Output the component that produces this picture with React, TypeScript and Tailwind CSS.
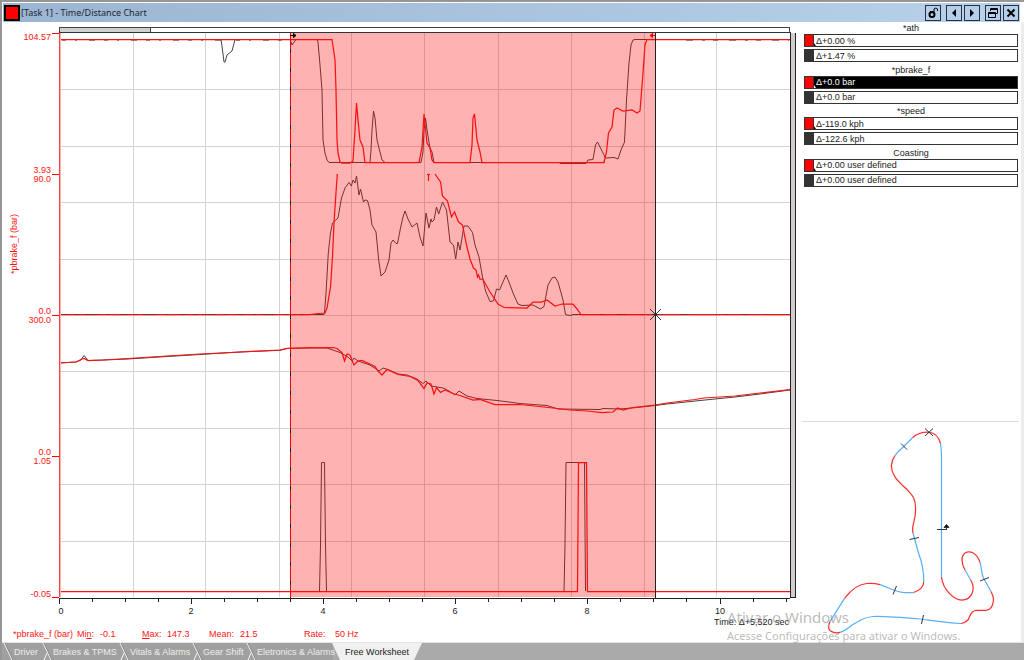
const groups = [
  { name: '*ath', values: ['Δ+0.00 %', 'Δ+1.47 %'], active: false },
  { name: '*pbrake_f', values: ['Δ+0.0 bar', 'Δ+0.0 bar'], active: true },
  { name: '*speed', values: ['Δ-119.0 kph', 'Δ-122.6 kph'], active: false },
  { name: 'Coasting', values: ['Δ+0.00 user defined', 'Δ+0.00 user defined'], active: false },
];

const tabs = [
  { label: 'Driver', width: 'w-[39px]' },
  { label: 'Brakes & TPMS', width: 'w-[77px]' },
  { label: 'Vitals & Alarms', width: 'w-[73px]' },
  { label: 'Gear Shift', width: 'w-[54px]' },
  { label: 'Eletronics & Alarms', width: 'w-[88px]' },
];

const gridX = [133, 205, 279, 351, 424, 498, 571, 644, 716];
const gridY = [89, 146, 202, 259, 315, 371, 428, 484, 541];
const ticks = Array.from({ length: 23 }, (_, i) => Math.floor(59 + i * 33.05));

const scaleLabels = [
  { y: 40, text: '104.57' },
  { y: 173, text: '3.93' },
  { y: 182, text: '90.0' },
  { y: 314, text: '0.0' },
  { y: 323, text: '300.0' },
  { y: 455, text: '0.0' },
  { y: 464, text: '1.05' },
  { y: 597, text: '-0.05' },
];

// Reference lap
const darkTraces = [
  '59,39.5 221,39.5 222,46 224,62 225,62 227,55 232,51 235,39.5 290,39.5 292,45 296,39.5 317,39.5 318,42 320,65 322,90 323,140 325,153 327,160 329,162.5 370,162.5 371,150 372,130 373.5,111 375,118 377,140 380,152 382,160 385,162.5 421,162.5 423,152 424,130 425.5,118 427,130 430,148 432,152 434,162.5 559,162.5 560,163.5 586,163.5 588,160 593,159.5 595.5,145 597.5,142 605.5,158 614,157.5 618,159 621,150 624.5,142 626.5,100 629,63 631,45 633,40 635,39.5 790,39.5',
  '59,314.5 324,314.5 324.5,313 326,293 328.3,253 330.5,233 332.5,223 338,218 341.5,198 345,188 349,182.5 351.3,186 353,180 355,183 356.5,176 359,195 360.5,189 363.5,202 365,200 367.5,200.5 370,210 372,225 376,232 378.7,260 381,276 385,272 389,260 391,243 393,240 396,243.5 397.5,243.5 400.5,228 403,217 405,211 408,219 412,227 417,223 420,237 423,246 426,213 429,228 431,219 432,222 434,220 436.5,207 438.7,214 442.5,202 446.5,210 450,242 453.5,245 455.7,259 458,242 460,250 464,226 468,226 472.5,232.5 475,245 479,257 482.5,277 485.5,291 490,301.5 493.5,301 496.5,289 499.5,290 506,275 509,282 513,293 518,304 522,305.5 533,305 540.5,309 544,306.5 548,285 552,278 555,277 558,282 563,300 565.5,314.5 570,315.5 573,314.5 790,314.5',
  '59,363 76,362 81,360 84,355.5 88,360.5 103,360 128,359 167,356.5 200,354.5 240,352 280,350.3 287,348.5 310,348 327,348 340,352.5 348,357 352,361 354,358 358,361 370,365 379,371 383,368 388,369.5 398,374 407,375 417,379 423,383.5 426,381 431,386 443,388 449,391 455,395 459,391 467,396 477,398.5 497,400.5 520,403.5 547,405.5 558,409 600,409.5 603,408.5 620,409 637,407.5 655,405.5 667,404 700,400.5 735,397 760,394 790,390',
  '319.5,591 320.5,545 321.5,462.5 324.5,462.5 325.5,545 326.5,591',
  '564,591 565,545 566,462.5 584.5,462.5 585.5,591',
];

// Main lap
const redTraces = [
  '59,39.5 332,39.5 335,60 336,90 337,140 338,153 340,162 342,163 350,163 353,161 355,130 356.5,103 358,120 360,140 363,147 365,162.5 419,162.5 422,147 424,114 427,143 430,148 432,160 434,162.5 470,162.5 472,145 473,118 474.5,114 477,140 480,152 482,162.5 604,162.5 606.5,152 608.5,133 612,127 614,110 617,108 623,111 632,110 637,113 640,111 642.5,80 645,45 647,39.5 790,39.5',
  '59,314.5 310,314.5 318,313.5 325,313 327,308 330.5,287 332.5,257 334,223 335.7,197 337.3,174',
  '427,174.5 430,174.5',
  '428.5,174 428.5,181',
  '435,174 440.5,182 442.5,196 447.5,201 451.5,217 454.5,212 458.5,222 462.5,225 466.5,245 470,259 473.5,268 476,270 477.5,277 478.5,275 480,279 482.7,279 490,292 498,304 504,307.5 527,308 533,302 541.5,302 547,300 555,306 562,304 573,304 577,309 581,314.5 790,314.5',
  '59,363 76,362 82,359 84,358.5 88,360.5 103,360 128,358.5 167,356 200,354 240,352 280,350 287,348.3 310,347.5 333,347.5 337,348.5 342,352.5 344.5,361 347,354 350,355 354,365 358,361 362,360.5 375,366.5 378,371 382,375 387,369.5 398,374.5 410,376.5 418,380.5 424,388.5 427,383 431,384 434,394 436.5,387.5 440.5,392.5 445,390 453,393.5 460,395.5 473,400 480,399.5 495,404.5 520,404.5 553,408 570,410 587,411 602,412.5 613,412 617.5,408 623,410 633,407.5 655,405 667,403 695,399.5 704,398 735,396 760,393 790,389.5',
  '59,591.5 577.5,591.5 578.5,462.5 586.5,462.5 587.5,591.5 790,591.5',
];

const trackBlue = [
  'M940.5 443.5 Q941.5 450 941.5 460 V577',
  'M970.7 580 L965 570',
  'M980 562.5 C982 568 981 573 983.5 578 L991 591.5',
  'M961 623.5 C947 623 935 621 920 619 C903 617.5 885 616 873 616.5 Q866 617 861 620 L852 625 Q845 631 840 632.3',
  'M830 621.7 L844.5 598.3',
  'M880 584.7 C890 588 895 592 904 592.5 H913.5',
  'M923.7 582 C924 570 922 562 918.5 553 L913 533',
  'M895 455.7 Q898 451 903.5 446.7 L912.7 437.5',
];

const trackRed = [
  'M941.5 577 C943 590 954 600 962 600 C970 600 977 591 970.7 580',
  'M965 570 C961 563 961 556 965 553 C970 550 977 553 980 562.5',
  'M991 591.5 C993 595 993.5 597 993.5 600 C993 606 991 610 986 610.3 H976 C970 611 970 617 968 620 Q965 623 961 623.5',
  'M840 632.3 C834 634 829 631 828.7 628 Q828.5 624 830 621.7',
  'M844.5 598.3 C851 590 858 584 866.7 583.5 Q874 583 880 584.7',
  'M913.5 592.5 C920 591 924 586 923.7 582',
  'M913 533 C911 525 916 520 915.5 510 C916 498 912 495 906.5 489 C902 485 896 480 894 475 C890 469 891 461 895 455.7',
  'M912.7 437.5 Q918 432 928.5 432 C936 433 939 437 940.5 443.5',
];

function TimeChart() {
  return (
    <svg
      viewBox="2 22 795 594"
      preserveAspectRatio="xMinYMin meet"
      className="block min-h-0 w-full flex-1"
      fontFamily="'Liberation Sans', sans-serif"
      fontSize="9"
      role="img"
      aria-label="Time/Distance Chart"
    >
      {/* Zoom range */}
      <rect x="59.5" y="27.5" width="730" height="5" fill="#fff" stroke="#444" />
      <rect x="59.5" y="27.5" width="91" height="5" fill="#d0d0d0" stroke="#444" />

      {/* Grid */}
      <g fill="#d3d3d3" shapeRendering="crispEdges">
        {gridX.map((x) => (
          <rect key={x} x={x} y="33" width="1" height="564" />
        ))}
        {gridY.map((y) => (
          <rect key={y} x="60" y={y} width="730" height="1" />
        ))}
      </g>

      <g fill="none" stroke="#444" strokeWidth="1">
        {darkTraces.map((points) => (
          <polyline key={points} points={points} />
        ))}
      </g>

      {/* Selected range */}
      <rect x="290" y="33" width="365" height="564" fill="#ff0000" fillOpacity="0.3" />

      <g fill="none" stroke="#ff1010" strokeWidth="1.25">
        {redTraces.map((points) => (
          <polyline key={points} points={points} />
        ))}
      </g>
      <g fill="none" stroke="#333" strokeWidth="1">
        <path d="M62 40.5 H221 M236 40.5 H289" strokeDasharray="4 9 2 12 6 9" strokeOpacity="0.5" />
        <path d="M686 40.5 H789" strokeDasharray="7 9 3 8 5 11" strokeOpacity="0.5" />
        <path d="M60 314.5 H289" strokeDasharray="9 6 4 5 15 8 3 9" strokeOpacity="0.4" />
        <path d="M300 314.5 H323 M600 314.5 H789" strokeDasharray="3 14 9 15 2 19" strokeOpacity="0.4" />
      </g>

      {/* Frame */}
      <g shapeRendering="crispEdges">
        <rect x="59" y="32" width="732" height="1" fill="#333" />
        <rect x="59" y="33" width="1" height="564" fill="#ff4040" />
        <rect x="60" y="33" width="1" height="564" fill="#ffb0b0" />
        <rect x="59" y="598" width="731" height="1" fill="#222" />
        <rect x="790" y="33" width="6" height="565" fill="#d0cccc" />
        <rect x="790" y="33" width="1" height="565" fill="#222" />
        <rect x="795" y="33" width="1" height="565" fill="#222" />
        <rect x="790" y="597" width="6" height="1" fill="#222" />
        {ticks.map((x, i) => (
          <rect key={x} x={x} y="598" width="1" height={i % 4 === 0 ? 6 : 4} fill="#222" />
        ))}
      </g>

      {/* Cursors */}
      <path d="M290.5 33 V598" stroke="#ff0000" />
      <path d="M290.5 49 V598" stroke="#222" strokeDasharray="4 15" />
      <path d="M655.5 33 V598" stroke="#222" />
      <path d="M290 35.5 H294 M293.5 33.5 L296 35.5 L293.5 37.5 Z" fill="#000" stroke="#000" strokeWidth="1" />
      <path d="M655 35.5 H651 M652.5 33.5 L650 35.5 L652.5 37.5 Z" fill="#ff0000" stroke="#ff0000" strokeWidth="1" />
      <path d="M650 309 L661 320 M661 309 L650 320 M652 314.5 H659" stroke="#333" />

      {/* Scales */}
      <g fill="#ff0000" shapeRendering="crispEdges">
        {[33, 174, 315, 456, 597].map((y) => (
          <rect key={y} x="52" y={y} width="7" height="1" />
        ))}
      </g>
      <g fill="#ff1414" textAnchor="end">
        {scaleLabels.map((label) => (
          <text key={label.y} x="51" y={label.y}>
            {label.text}
          </text>
        ))}
      </g>
      <text transform="translate(17 244) rotate(-90)" textAnchor="middle" fill="#ff1414">
        *pbrake_f (bar)
      </text>
      <g fill="#222" textAnchor="middle">
        {[0, 2, 4, 6, 8, 10].map((sec) => (
          <text key={sec} x={sec === 0 ? 61 : Math.floor(59 + sec * 66.1)} y="614">
            {sec}
          </text>
        ))}
      </g>
    </svg>
  );
}

function TrackMap() {
  return (
    <svg viewBox="802 422 217 220" className="block w-full" fill="none" role="img" aria-label="Track map">
      <g stroke="#58b0fb" strokeWidth="1.25">
        {trackBlue.map((d) => (
          <path key={d} d={d} />
        ))}
      </g>
      <g stroke="#fa3030" strokeWidth="1.25">
        {trackRed.map((d) => (
          <path key={d} d={d} />
        ))}
      </g>
      <g stroke="#333" strokeWidth="1">
        <path d="M909.5 539.5 L919 537.5" />
        <path d="M896.5 586 L893 594.5" />
        <path d="M923.5 615 L921.5 624" />
        <path d="M980 581 L989 577.5" />
        <path d="M901 443.5 L907 449.5" />
        <path d="M925 428.5 L933 436 M933 428.5 L925 436" />
        <path d="M937 529.5 H947 M946.5 530 V526" />
        <path d="M944 527.5 L946.5 524.5 L949 527.5 Z" fill="#000" />
      </g>
    </svg>
  );
}

function WindowButton({ label, children }: { label: string; children: React.ReactNode }) {
  return (
    <button
      type="button"
      aria-label={label}
      className="flex size-4 items-center justify-center border border-[#26323e] bg-[#b5cfea]"
    >
      <svg viewBox="0 0 14 14" className="size-[14px]" fill="none" stroke="#000">
        {children}
      </svg>
    </button>
  );
}

export default function App() {
  return (
    <div className="relative flex h-screen flex-col overflow-hidden border-t-2 border-l-2 border-[#969696] bg-white font-['Liberation_Sans',sans-serif] text-[9px] leading-3 text-[#222]">
      {/* Title bar */}
      <header className="mt-px mr-1 ml-px flex h-[19px] shrink-0 items-center bg-linear-to-r from-[#9bb5d2] to-[#b9d1ea] pr-px pl-px">
        <div className="size-4 border-2 border-black bg-[#ff0000]" />
        <h1 className="ml-px flex-1 font-['Noto_Sans',sans-serif] text-[9px] text-[#1c2632]">
          [Task 1] - Time/Distance Chart
        </h1>
        <div className="flex gap-[5px]">
          <WindowButton label="Lock">
            <circle cx="6" cy="8.5" r="2.5" strokeWidth="2" />
            <path d="M8 6 V3 Q10 1 11.5 3 V5 M4 5.5 H7" />
          </WindowButton>
          <div className="flex gap-[2px]">
            <WindowButton label="Previous">
              <path d="M9 3 V11 L5 7 Z" fill="#000" stroke="none" />
            </WindowButton>
            <WindowButton label="Next">
              <path d="M5 3 V11 L9 7 Z" fill="#000" stroke="none" />
            </WindowButton>
          </div>
          <div className="flex gap-[2px]">
            <WindowButton label="Restore">
              <path d="M4.5 5 V2.5 H11.5 V7.5 H10 M4.5 3.5 H11.5 M2.5 6.5 H9.5 V11.5 H2.5 Z M2.5 7.5 H9.5" />
            </WindowButton>
            <WindowButton label="Close">
              <path d="M3.5 3.5 L10.5 10.5 M10.5 3.5 L3.5 10.5" strokeWidth="2" />
            </WindowButton>
          </div>
        </div>
      </header>

      <div className="flex min-h-0 flex-1">
        <main className="flex min-w-0 flex-1 flex-col">
          <TimeChart />
          <div className="h-3 shrink-0 pr-2 text-right">Time: Δ+5,520 sec</div>
          <div className="flex h-[14px] shrink-0 pl-[11px] text-[#ff1414]">
            <span className="w-16">*pbrake_f (bar)</span>
            <span className="w-[23px]">
              Mi<u>n</u>:
            </span>
            <span className="w-[42px]">-0.1</span>
            <span className="w-[25px]">
              <u>M</u>ax:
            </span>
            <span className="w-[42px]">147.3</span>
            <span className="w-[31px]">Mean:</span>
            <span className="w-16">21.5</span>
            <span className="w-[31px]">Rate:</span>
            <span>50 Hz</span>
          </div>
        </main>

        {/* Channel values and map */}
        <aside className="flex w-[227px] shrink-0 flex-col border-r-[3px] border-[#ececec] pr-[2px] pl-[5px]">
          <div className="flex h-[165px] flex-col justify-between pr-px pl-[2px]">
            {groups.map((group) => (
              <section key={group.name}>
                <h2 className="h-3 text-center">{group.name}</h2>
                <div className="flex flex-col gap-[2px]">
                  {group.values.map((value, i) => {
                    const selected = group.active && i === 0;
                    return (
                      <div
                        key={i}
                        className={`flex h-[13px] items-center border border-[#333] ${selected ? 'bg-black text-white' : 'bg-white'}`}
                      >
                        <span className={`h-full w-[9px] border-r border-[#333] ${i === 0 ? 'bg-[#ff0000]' : 'bg-[#333]'}`} />
                        <svg viewBox="0 0 2 11" className="h-[11px] w-[2px]">
                          {i === 0 && <path d="M0 8 L2 11 H0 Z" fill={selected ? '#fff' : '#000'} />}
                        </svg>
                        <span>{value}</span>
                      </div>
                    );
                  })}
                </div>
              </section>
            ))}
          </div>
          <div className="mt-auto border-t border-[#dcdcdc]">
            <TrackMap />
          </div>
        </aside>
      </div>

      {/* Worksheet tabs */}
      <nav className="flex h-[18px] shrink-0 items-stretch border-t border-[#e4e4e4] bg-[#aaaaaa]">
        {tabs.map((tab) => (
          <button
            key={tab.label}
            type="button"
            className={`${tab.width} flex shrink-0 items-center bg-[#a0a0a0] whitespace-nowrap text-[#ededed]`}
          >
            <svg viewBox="0 0 12 17" className="h-[17px] w-3 shrink-0" fill="none">
              <path d="M2 0 L10 17" stroke="#f4f4f4" />
              <path d="M3 0 L11 17" stroke="#777" strokeOpacity="0.5" />
              {tab.label !== 'Driver' && <path d="M6 10 L3 17" stroke="#f4f4f4" />}
            </svg>
            {tab.label}
          </button>
        ))}
        <button
          type="button"
          className="-ml-px w-[90px] bg-[#f0f0f0] whitespace-nowrap text-[#222] [clip-path:polygon(0_0,100%_0,calc(100%-8px)_100%,8px_100%)]"
        >
          Free Worksheet
        </button>
      </nav>

      {/* Activation watermark */}
      <div className="pointer-events-none absolute right-[53px] bottom-4 w-[244px] font-['Noto_Sans',sans-serif] whitespace-nowrap text-[#8c8c8c]/60">
        <p className="text-[15px] leading-[19px]">Ativar o Windows</p>
        <p className="text-[11px] leading-[17px]">Acesse Configurações para ativar o Windows.</p>
      </div>
    </div>
  );
}
